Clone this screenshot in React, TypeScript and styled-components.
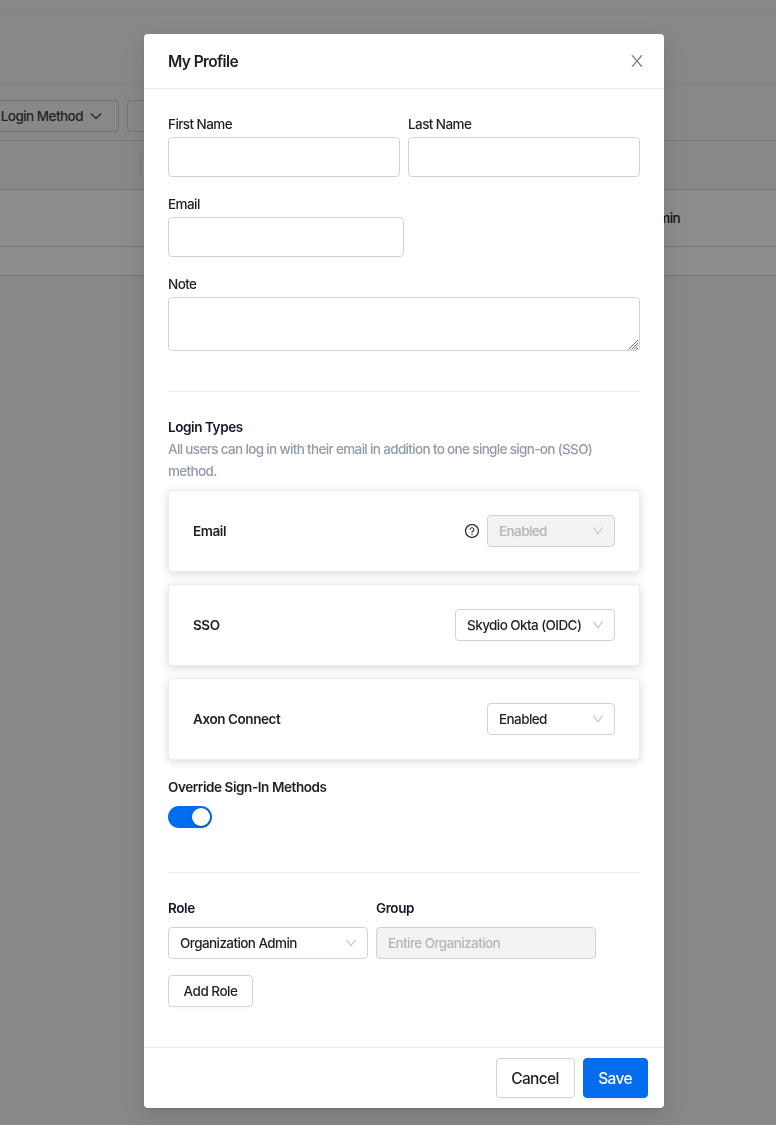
import React from "react";
import styled, { createGlobalStyle, css } from "styled-components";

const GlobalStyle = createGlobalStyle`
  *, *::before, *::after { box-sizing: border-box; }
  html, body { margin: 0; height: 100%; overflow: hidden; }
  body {
    font-family: Inter, "Liberation Sans", sans-serif;
    font-size: 13.5px;
    font-weight: 450;
    line-height: 22px;
    letter-spacing: -0.58px;
    color: #1f1f1f;
    background: #f8f8f8;
  }
  input, textarea, button { font: inherit; letter-spacing: inherit; color: inherit; }
`;

/* ---------- page behind the dialog ---------- */

const Page = styled.div`
  display: flex;
  flex-direction: column;
  height: 1125px;
`;

const Strip = styled.div<{ $height: number; $bg?: string; $line?: string }>`
  flex: none;
  display: flex;
  align-items: center;
  height: ${(p) => p.$height}px;
  background: ${(p) => p.$bg ?? "#f8f8f8"};
  border-bottom: 1px solid ${(p) => p.$line ?? "#dadada"};
`;

const FilterButton = styled.button<{ $width: number }>`
  display: flex;
  align-items: center;
  gap: 7px;
  width: ${(p) => p.$width}px;
  height: 32px;
  margin: 16px 8px 8px 0;
  padding: 0 16px 0 0;
  justify-content: flex-end;
  white-space: nowrap;
  letter-spacing: -0.54px;
  color: #434343;
  background: transparent;
  border: 1px solid #cfcfcf;
  border-left-width: 0;
  border-radius: 0 4px 4px 0;

  & + & {
    border-left-width: 1px;
    border-radius: 4px;
  }
`;

const ColumnDivider = styled.span`
  width: 1px;
  height: 24px;
  margin-left: 140px;
  background: #dadada;
`;

const RoleCell = styled.span`
  width: 680px;
  text-align: right;
`;

const Mask = styled.div`
  position: fixed;
  inset: 0;
  padding: 34px 112px 0 144px;
  background: rgba(0, 0, 0, 0.45);
`;

/* ---------- dialog ---------- */

const Dialog = styled.section`
  width: 520px;
  height: 1074px;
  display: flex;
  flex-direction: column;
  background: #fff;
  border-radius: 4px;
  box-shadow: 0 3px 6px -4px rgba(0, 0, 0, 0.12), 0 6px 16px rgba(0, 0, 0, 0.08),
    0 9px 28px 8px rgba(0, 0, 0, 0.05);
`;

const Header = styled.header`
  display: flex;
  align-items: center;
  justify-content: space-between;
  height: 55px;
  padding: 0 19px 0 24px;
  border-bottom: 1px solid #ececec;
`;

const Title = styled.h1`
  margin: 0;
  padding-top: 2px;
  font-size: 15.5px;
  font-weight: 600;
  letter-spacing: -0.6px;
`;

const CloseButton = styled.button`
  display: flex;
  padding: 0;
  border: 0;
  background: none;
  color: #858585;
`;

const Body = styled.div`
  flex: 1;
  padding: 24px;
`;

const FieldRow = styled.div`
  display: flex;
  gap: 8px;
`;

const Field = styled.label<{ $width?: number }>`
  display: flex;
  flex-direction: column;
  gap: 2px;
  margin-bottom: 16px;
  ${(p) => (p.$width ? css`width: ${p.$width}px;` : css`flex: 1;`)}
`;

const box = css`
  background: #fff;
  border: 1px solid #d1d1d1;
  border-radius: 4px;
`;

const TextInput = styled.input`
  ${box}
  width: 100%;
  height: 40px;
  padding: 0 11px;
`;

const TextAreaFrame = styled.span`
  position: relative;
  display: block;
`;

const TextArea = styled.textarea`
  ${box}
  display: block;
  width: 100%;
  height: 54px;
  padding: 4px 11px;
  resize: none;
`;

const Grip = styled.svg`
  position: absolute;
  right: 1px;
  bottom: 1px;
  pointer-events: none;
`;

const Rule = styled.hr<{ $top: number }>`
  height: 1px;
  margin: ${(p) => p.$top}px 0 24px;
  border: 0;
  background: #ebebeb;
`;

const Heading = styled.h2<{ $navy?: boolean }>`
  margin: 0;
  font-size: 13.5px;
  font-weight: 600;
  letter-spacing: -0.42px;
  color: ${(p) => (p.$navy ? "#111827" : "inherit")};
`;

const Hint = styled.p`
  margin: 0 0 8px;
  color: #919aa8;
  letter-spacing: -0.66px;
`;

const CardList = styled.div`
  display: flex;
  flex-direction: column;
  gap: 12px;
  margin-bottom: 16px;
`;

const Card = styled.div`
  display: flex;
  align-items: center;
  gap: 8px;
  height: 82px;
  padding: 24px;
  background: #fff;
  border: 1px solid #ebebeb;
  border-radius: 4px;
  box-shadow: 0 2px 8px rgba(0, 0, 0, 0.15);
`;

const CardTitle = styled(Heading)`
  margin-right: auto;
`;

const SelectBox = styled.div<{ $width: number; $disabled?: boolean }>`
  ${box}
  display: flex;
  align-items: center;
  justify-content: space-between;
  width: ${(p) => p.$width}px;
  height: 32px;
  padding: 0 10px 0 11px;
  white-space: nowrap;
  ${(p) => p.$disabled && css`background: #f3f3f3; color: #b5b5b5;`}
`;

const Arrow = styled.svg`
  flex: none;
  color: #bfbfbf;
`;

const Toggle = styled.button`
  display: flex;
  justify-content: flex-end;
  width: 44px;
  height: 22px;
  margin-top: 8px;
  padding: 2px;
  border: 0;
  border-radius: 11px;
  background: #016ced;
`;

const Knob = styled.span`
  width: 18px;
  height: 18px;
  border-radius: 50%;
  background: #fff;
  box-shadow: 0 2px 4px rgba(0, 35, 11, 0.2);
`;

const RoleField = styled.div`
  display: flex;
  flex-direction: column;
  gap: 8px;
  margin-bottom: 16px;
`;

const Button = styled.button<{ $large?: boolean; $primary?: boolean; $width: number }>`
  ${box}
  width: ${(p) => p.$width}px;
  height: ${(p) => (p.$large ? 40 : 32)}px;
  padding: ${(p) => (p.$large ? "2px 1px 0 0" : "0")};
  font-size: ${(p) => (p.$large ? 15.5 : 13.5)}px;
  letter-spacing: ${(p) => (p.$large ? -0.66 : -0.5)}px;
  box-shadow: 0 2px 0 rgba(0, 0, 0, 0.02);
  ${(p) => p.$primary && css`
    color: #fff;
    background: #016ced;
    border-color: #016ced;
    box-shadow: 0 2px 0 rgba(0, 0, 0, 0.045);
  `}
`;

const Footer = styled.footer`
  display: flex;
  justify-content: flex-end;
  gap: 8px;
  padding: 10px 16px;
  border-top: 1px solid #ececec;
`;

const DownArrow = () => (
  <Arrow width="12" height="12" viewBox="64 64 896 896" fill="currentColor">
    <path d="M884 256h-75c-5.1 0-9.9 2.5-12.9 6.6L512 654.2 227.9 262.6c-3-4.1-7.8-6.6-12.9-6.6h-75c-6.5 0-10.3 7.4-6.5 12.7l352.6 486.1c12.8 17.6 39 17.6 51.7 0l352.6-486.1c3.9-5.3.1-12.7-6.4-12.7z" />
  </Arrow>
);

const CloseIcon = () => (
  <svg width="16" height="16" viewBox="64 64 896 896" fill="currentColor">
    <path d="M563.8 512l262.5-312.9c4.4-5.2.7-13.1-6.1-13.1h-79.8c-4.7 0-9.2 2.1-12.3 5.7L511.6 449.8 295.1 191.7c-3-3.6-7.5-5.7-12.3-5.7H203c-6.8 0-10.5 7.9-6.1 13.1L459.4 512 196.9 824.9A7.95 7.95 0 00203 838h79.8c4.7 0 9.2-2.1 12.3-5.7l216.5-258.1 216.5 258.1c3 3.6 7.5 5.7 12.3 5.7h79.8c6.8 0 10.5-7.9 6.1-13.1L563.8 512z" />
  </svg>
);

const HelpIcon = () => (
  <svg width="14" height="14" viewBox="64 64 896 896" fill="currentColor">
    <path d="M512 64C264.6 64 64 264.6 64 512s200.6 448 448 448 448-200.6 448-448S759.4 64 512 64zm0 820c-205.4 0-372-166.6-372-372s166.6-372 372-372 372 166.6 372 372-166.6 372-372 372z" />
    <path d="M623.6 316.7C593.6 290.4 554 276 512 276s-81.6 14.5-111.6 40.7C369.2 344 352 380.7 352 420v7.6c0 4.4 3.6 8 8 8h48c4.4 0 8-3.6 8-8V420c0-44.1 43.1-80 96-80s96 35.9 96 80c0 31.1-22 59.6-56.1 72.7-21.2 8.1-39.2 22.3-52.1 40.9-13.1 19-19.9 41.8-19.9 64.9V620c0 4.4 3.6 8 8 8h48c4.4 0 8-3.6 8-8v-22.7a48.3 48.3 0 0130.9-44.8c59-22.7 97.1-74.7 97.1-132.5.1-39.3-17.1-76-48.3-103.3zM472 732a40 40 0 1080 0 40 40 0 10-80 0z" />
  </svg>
);

const Chevron = () => (
  <svg width="12" height="12" viewBox="0 0 12 12" fill="none" stroke="currentColor" strokeWidth="1.3" strokeLinecap="round" strokeLinejoin="round">
    <path d="M1.3 4 6 8.5 10.7 4" />
  </svg>
);

export default function App() {
  return (
    <>
      <GlobalStyle />
      <Page>
        <Strip $height={11} $line="#ebebeb" />
        <Strip $height={73} $line="#ebebeb" />
        <Strip $height={57}>
          <FilterButton $width={119}>
            Login Method
            <Chevron />
          </FilterButton>
          <FilterButton $width={120} />
        </Strip>
        <Strip $height={49}>
          <ColumnDivider />
        </Strip>
        <Strip $height={57} $bg="#fff">
          <RoleCell>Organization Admin</RoleCell>
        </Strip>
        <Strip $height={29} $bg="#fff" />
      </Page>
      <Mask>
        <Dialog role="dialog">
          <Header>
            <Title>My Profile</Title>
            <CloseButton>
              <CloseIcon />
            </CloseButton>
          </Header>
          <Body>
            <FieldRow>
              <Field>
                First Name
                <TextInput />
              </Field>
              <Field>
                Last Name
                <TextInput />
              </Field>
            </FieldRow>
            <Field $width={236}>
              Email
              <TextInput />
            </Field>
            <Field $width={472}>
              Note
              <TextAreaFrame>
                <TextArea />
                <Grip width="11" height="11" viewBox="0 0 11 11" stroke="#6f6f6f" strokeWidth="1">
                  <path d="M0.5 10.5 10 1M3.5 10.5 10 4M6 10.5 10 6.5M8.5 10.5 10 9" />
                </Grip>
              </TextAreaFrame>
            </Field>
            <Rule $top={40} />
            <Heading $navy>Login Types</Heading>
            <Hint>All users can log in with their email in addition to one single sign-on (SSO) method.</Hint>
            <CardList>
              <Card>
                <CardTitle>Email</CardTitle>
                <HelpIcon />
                <SelectBox $width={128} $disabled>
                  Enabled
                  <DownArrow />
                </SelectBox>
              </Card>
              <Card>
                <CardTitle>SSO</CardTitle>
                <SelectBox $width={160}>
                  Skydio Okta (OIDC)
                  <DownArrow />
                </SelectBox>
              </Card>
              <Card>
                <CardTitle>Axon Connect</CardTitle>
                <SelectBox $width={128}>
                  Enabled
                  <DownArrow />
                </SelectBox>
              </Card>
            </CardList>
            <Heading>Override Sign-In Methods</Heading>
            <Toggle role="switch" aria-checked="true">
              <Knob />
            </Toggle>
            <Rule $top={44} />
            <FieldRow>
              <RoleField>
                <Heading $navy>Role</Heading>
                <SelectBox $width={200}>
                  Organization Admin
                  <DownArrow />
                </SelectBox>
              </RoleField>
              <RoleField>
                <Heading $navy>Group</Heading>
                <SelectBox $width={220} $disabled>
                  Entire Organization
                </SelectBox>
              </RoleField>
            </FieldRow>
            <Button $width={85}>Add Role</Button>
          </Body>
          <Footer>
            <Button $large $width={79}>Cancel</Button>
            <Button $large $primary $width={65}>Save</Button>
          </Footer>
        </Dialog>
      </Mask>
    </>
  );
}
